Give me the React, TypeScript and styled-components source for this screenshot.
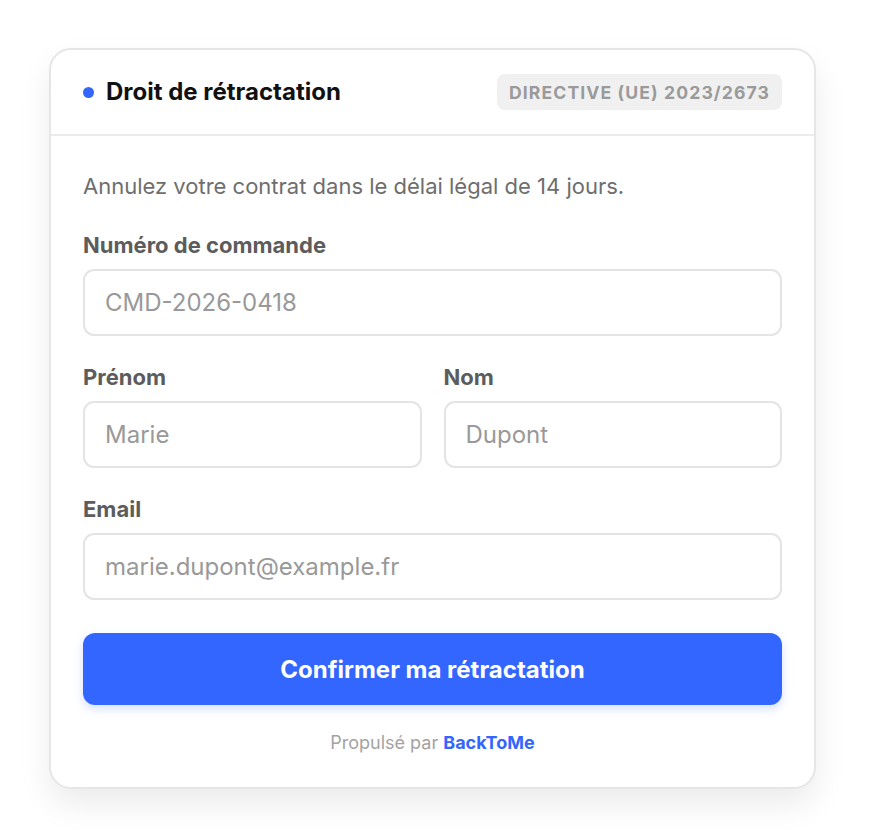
import React from "react";
import styled, { createGlobalStyle } from "styled-components";

const Global = createGlobalStyle`
  html, body { margin: 0; padding: 0; background: #ffffff; }
  body { font-family: Inter, "Noto Sans", sans-serif; -webkit-font-smoothing: antialiased; }
  * { box-sizing: border-box; }
`;

const Page = styled.div`
  padding: 48px 0 48px 49px;
`;

const Card = styled.div`
  width: 767px;
  background: #fff;
  border: 2px solid #e6e6e6;
  border-radius: 22px;
  box-shadow: 0 16px 32px rgba(0, 0, 0, 0.08);
  overflow: hidden;
`;

const Header = styled.div`
  display: flex;
  align-items: center;
  justify-content: space-between;
  height: 86px;
  padding: 0 32px;
  border-bottom: 2px solid #ebebeb;
`;

const TitleWrap = styled.div`
  display: flex;
  align-items: center;
  gap: 12px;
`;

const Dot = styled.span`
  width: 11px;
  height: 11px;
  border-radius: 50%;
  background: #3366ff;
`;

const Title = styled.h1`
  margin: 0;
  font-size: 24px;
  line-height: 30px;
  font-weight: 700;
  color: #111;
`;

const Badge = styled.span`
  background: #f0f0f0;
  color: #9a9a9a;
  font-size: 17.6px;
  font-weight: 700;
  letter-spacing: 1.1px;
  text-transform: uppercase;
  padding: 0 12px;
  height: 36px;
  display: flex;
  align-items: center;
  border-radius: 8px;
`;

const Body = styled.div`
  padding: 36px 32px 33px;
  display: flex;
  flex-direction: column;
`;

const Description = styled.p`
  margin: 0 0 32px;
  font-size: 22px;
  line-height: 28px;
  color: #6e6e6e;
`;

const Field = styled.label`
  display: flex;
  flex-direction: column;
  gap: 11px;
  margin-bottom: 28px;
  min-width: 0;
`;

const Label = styled.span`
  font-size: 22px;
  line-height: 26px;
  font-weight: 700;
  color: #5c5c5c;
`;

const Input = styled.input`
  width: 100%;
  min-width: 0;
  height: 67px;
  border: 2px solid #e4e4e4;
  border-radius: 11px;
  padding: 0 20px;
  font-family: inherit;
  font-size: 24px;
  color: #333;
  background: #fff;
  outline: none;
  &::placeholder { color: #999; }
`;

const Row = styled.div`
  display: grid;
  grid-template-columns: minmax(0, 1fr) minmax(0, 1fr);
  gap: 22px;
`;

const Button = styled.button`
  height: 72px;
  border: none;
  border-radius: 12px;
  background: #3366ff;
  color: #fff;
  font-family: inherit;
  font-size: 24px;
  font-weight: 700;
  box-shadow: 0 4px 10px rgba(51, 102, 255, 0.2);
  margin-top: 5px;
`;

const Footer = styled.p`
  margin: 27px 0 0;
  text-align: center;
  font-size: 18px;
  line-height: 22px;
  color: #a3a3a3;
`;

const Brand = styled.span`
  color: #3366ff;
  font-weight: 700;
`;

export default function App() {
  return (
    <>
      <Global />
      <Page>
        <Card>
          <Header>
            <TitleWrap>
              <Dot />
              <Title>Droit de rétractation</Title>
            </TitleWrap>
            <Badge>Directive (UE) 2023/2673</Badge>
          </Header>
          <Body>
            <Description>Annulez votre contrat dans le délai légal de 14 jours.</Description>
            <Field>
              <Label>Numéro de commande</Label>
              <Input placeholder="CMD-2026-0418" />
            </Field>
            <Row>
              <Field>
                <Label>Prénom</Label>
                <Input placeholder="Marie" />
              </Field>
              <Field>
                <Label>Nom</Label>
                <Input placeholder="Dupont" />
              </Field>
            </Row>
            <Field>
              <Label>Email</Label>
              <Input placeholder="marie.dupont@example.fr" />
            </Field>
            <Button>Confirmer ma rétractation</Button>
            <Footer>
              Propulsé par <Brand>BackToMe</Brand>
            </Footer>
          </Body>
        </Card>
      </Page>
    </>
  );
}
